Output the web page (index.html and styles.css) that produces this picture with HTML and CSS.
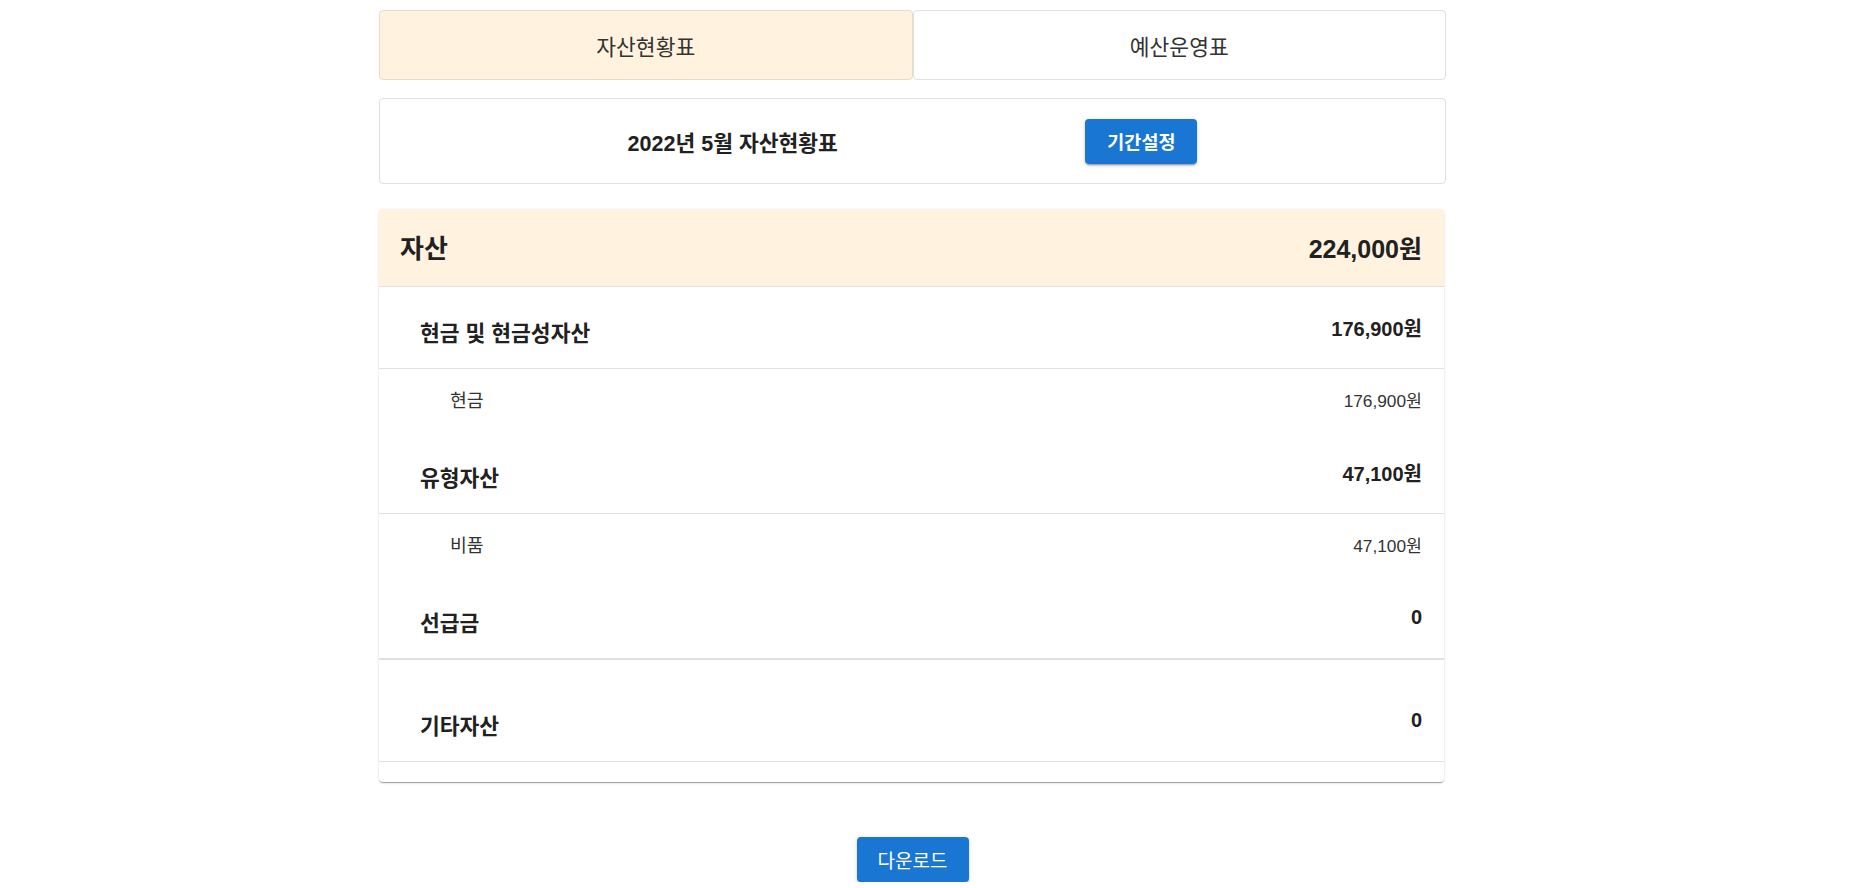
FILE: index.html
```html
<!DOCTYPE html>
<html lang="ko">
<head>
<meta charset="utf-8">
<title>자산현황표</title>
<link rel="stylesheet" href="styles.css">
</head>
<body>
<div class="viewport">
  <main class="page">
    <nav class="tabs">
      <button class="tab tab-active">자산현황표</button>
      <button class="tab">예산운영표</button>
    </nav>

    <section class="period-card">
      <h2 class="period-title">2022년 5월 자산현황표</h2>
      <button class="btn btn-bold">기간설정</button>
    </section>

    <section class="asset-card">
      <header class="asset-header">
        <span class="asset-header-label">자산</span>
        <span class="asset-header-amount">224,000원</span>
      </header>

      <div class="group-head">
        <span class="group-label">현금 및 현금성자산</span>
        <span class="group-amount">176,900원</span>
      </div>
      <div class="group-body">
        <div class="item"><span class="item-label">현금</span><span class="item-amount">176,900원</span></div>
      </div>

      <div class="group-head">
        <span class="group-label">유형자산</span>
        <span class="group-amount">47,100원</span>
      </div>
      <div class="group-body">
        <div class="item"><span class="item-label">비품</span><span class="item-amount">47,100원</span></div>
      </div>

      <div class="group-head group-head-thick">
        <span class="group-label">선급금</span>
        <span class="group-amount">0</span>
      </div>
      <div class="group-body group-body-empty"></div>

      <div class="group-head">
        <span class="group-label">기타자산</span>
        <span class="group-amount">0</span>
      </div>
      <div class="group-body group-body-empty"></div>
    </section>

    <div class="download-row">
      <button class="btn">다운로드</button>
    </div>
  </main>
</div>
</body>
</html>
```

FILE: styles.css
```css
* {
  box-sizing: border-box;
}

html, body {
  margin: 0;
  padding: 0;
  background: #ffffff;
}

body {
  font-family: "Liberation Sans", "Noto Sans CJK KR", sans-serif;
  color: #212121;
}

.viewport {
  padding-right: 34px;
}

.page {
  width: 1067px;
  margin: 0 auto;
  padding-top: 10px;
  display: flex;
  flex-direction: column;
}

/* Tabs */
.tabs {
  display: flex;
  height: 70px;
}

.tab {
  flex: 1;
  font-family: inherit;
  font-size: 21.5px;
  font-weight: 400;
  color: #333333;
  background: #ffffff;
  border: 1px solid #e0e0e0;
  border-radius: 4px;
  padding: 0;
  margin: 0;
  cursor: pointer;
}

.tab-active {
  background: #fff3e0;
  border-color: #e6dccd;
}

/* Period card */
.period-card {
  margin-top: 18px;
  height: 86px;
  border: 1px solid #e0e0e0;
  border-radius: 4px;
  display: flex;
  align-items: center;
  justify-content: space-evenly;
}

.period-title {
  margin: 0;
  font-size: 21.5px;
  font-weight: 700;
  color: #212121;
}

/* Buttons */
.btn {
  font-family: inherit;
  font-size: 19px;
  font-weight: 400;
  color: #ffffff;
  background: #1976d2;
  border: none;
  border-radius: 4px;
  width: 112px;
  height: 45px;
  padding: 0;
  cursor: pointer;
  box-shadow: 0px 3px 1px -2px rgba(0,0,0,0.2), 0px 2px 2px 0px rgba(0,0,0,0.14), 0px 1px 5px 0px rgba(0,0,0,0.12);
}

.btn-bold {
  font-weight: 700;
  font-size: 18.5px;
}

/* Asset card */
.asset-card {
  margin-top: 25px;
  margin-right: 2px;
  border-radius: 4px;
  background: #ffffff;
  overflow: hidden;
  box-shadow: 0px 2px 1px -1px rgba(0,0,0,0.2), 0px 1px 1px 0px rgba(0,0,0,0.14), 0px 1px 3px 0px rgba(0,0,0,0.12);
}

.asset-header {
  height: 78px;
  background: #fff3e0;
  border-bottom: 1px solid #e0e0e0;
  display: flex;
  align-items: center;
  justify-content: space-between;
  padding: 0 22px 2px 21px;
  font-size: 25px;
  font-weight: 700;
  color: #212121;
}

.asset-header-label {
  font-size: 26px;
}

.group-head {
  height: 82px;
  border-bottom: 1px solid #e0e0e0;
  display: flex;
  align-items: center;
  justify-content: space-between;
  padding: 0 22px 0 41px;
  font-size: 20px;
  font-weight: 700;
  color: #212121;
}

.group-head-thick {
  height: 83px;
  border-bottom-width: 2px;
}

.group-label {
  font-size: 21.5px;
  padding-top: 7px;
}

.group-body {
  padding: 8px 0 11px;
}

.group-body-empty {
  padding: 0;
  height: 20px;
}

.item {
  height: 44px;
  display: flex;
  align-items: center;
  justify-content: space-between;
  padding: 0 22px 0 71px;
  font-size: 17.3px;
  color: #333333;
}

.item-label {
  font-size: 18.3px;
}

.download-row {
  display: flex;
  justify-content: center;
  margin-top: 55px;
}
```
